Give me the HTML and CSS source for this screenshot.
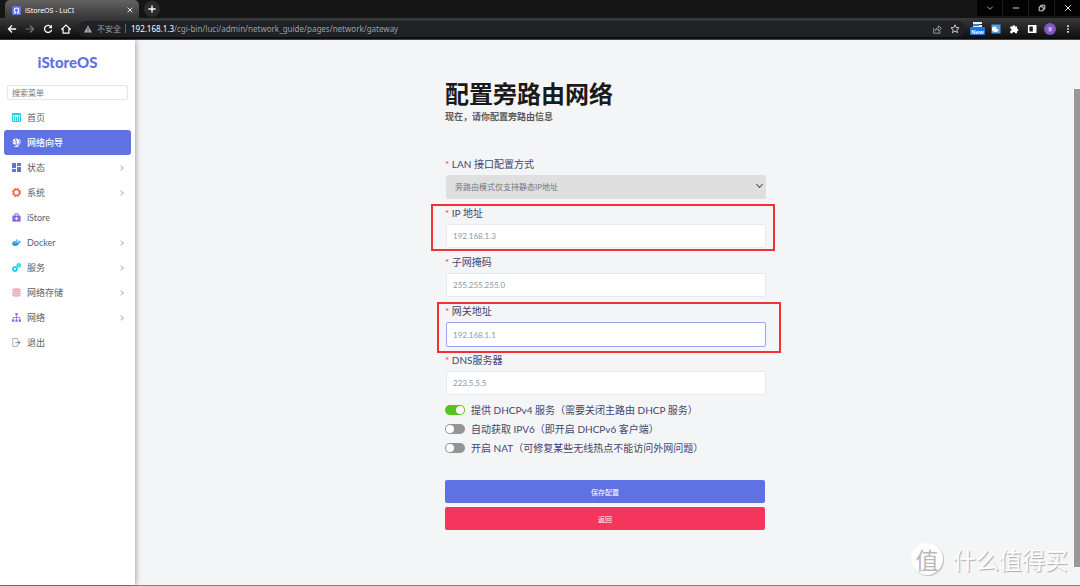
FILE: index.html
```html
<!DOCTYPE html>
<html lang="zh-CN">
<head>
<meta charset="utf-8">
<title>iStoreOS - LuCI</title>
<link rel="stylesheet" href="styles.css">
</head>
<body>
<div class="browser">
  <header class="chrome">
    <div class="tabbar">
      <div class="tab">
        <svg class="favicon" viewBox="0 0 16 16"><rect width="16" height="16" rx="2" fill="#5e72e4"/><path d="M3 12.500h3.200v-1.400a4 4 0 1 1 3.600 0v1.400H13" fill="none" stroke="#fff" stroke-width="2"/></svg>
        <span class="tab-title">iStoreOS - LuCI</span>
        <button class="icon-btn" aria-label="关闭标签页"><svg class="i6" viewBox="0 0 10 10"><path d="M1 1l8 8M9 1l-8 8" stroke="#eee" stroke-width="1.600"/></svg></button>
      </div>
      <button class="new-tab" aria-label="新标签页"><svg class="i8" viewBox="0 0 10 10"><path d="M5 .5v9M.5 5h9" stroke="#fff" stroke-width="1.700"/></svg></button>
      <div class="window-controls">
        <button aria-label="搜索标签页"><svg class="i8" viewBox="0 0 10 10"><path d="M1.500 3.200L5 6.700l3.500-3.500" fill="none" stroke="#aaa" stroke-width="1.200"/></svg></button>
        <button aria-label="最小化"><svg class="i8" viewBox="0 0 10 10"><path d="M1 5h8" stroke="#bbb" stroke-width="1.400"/></svg></button>
        <button aria-label="还原"><svg class="i8" viewBox="0 0 10 10"><path d="M1.500 3.500h5v5h-5zM3.500 3.500v-2h5v5h-2" fill="none" stroke="#ddd" stroke-width="1.200"/></svg></button>
        <button aria-label="关闭"><svg class="i8" viewBox="0 0 10 10"><path d="M1.500 1.500l7 7M8.500 1.500l-7 7" stroke="#eee" stroke-width="1.200"/></svg></button>
      </div>
    </div>
    <div class="toolbar">
      <nav class="nav-buttons" aria-label="导航">
        <button class="icon-btn" aria-label="后退"><svg class="i10" viewBox="0 0 12 12"><path d="M11 6H2M6 1.800L1.800 6 6 10.200" fill="none" stroke="#fff" stroke-width="1.600"/></svg></button>
        <button class="icon-btn" aria-label="前进"><svg class="i10" viewBox="0 0 12 12"><path d="M1 6h9M6 1.800L10.200 6 6 10.200" fill="none" stroke="#777" stroke-width="1.400"/></svg></button>
        <button class="icon-btn" aria-label="刷新"><svg class="i10" viewBox="0 0 12 12"><path d="M9.500 3.200A4.300 4.300 0 1 0 10.300 7" fill="none" stroke="#fff" stroke-width="1.600"/><path d="M10.800 1v4.200H6.600z" fill="#fff"/></svg></button>
        <button class="icon-btn" aria-label="主页"><svg class="i10" viewBox="0 0 12 12"><path d="M.8 6.200L6 1.300l5.200 4.900H9.500v4.800h-7V6.200z" fill="none" stroke="#fff" stroke-width="1.400"/></svg></button>
      </nav>
      <div class="address">
        <svg class="i8" viewBox="0 0 10 10"><path d="M5 .5l5 9H0z" fill="#aaa"/><path d="M5 3.500v3M5 7.300v1.200" stroke="#202124"/></svg>
        <span class="insecure">不安全</span>
        <span class="url"><b>192.168.1.3</b>/cgi-bin/luci/admin/network_guide/pages/network/gateway</span>
        <button class="icon-btn" aria-label="分享"><svg class="i10" viewBox="0 0 12 12"><path d="M2 4.500v6.500h7.500V8.500M4 8c.3-2.500 2-3.700 4-3.700V2.200l3.300 3.100L8 8.300V6.200C6.300 6.200 5 6.800 4 8z" fill="none" stroke="#aaa"/></svg></button>
        <button class="icon-btn" aria-label="收藏"><svg class="i10" viewBox="0 0 12 12"><path d="M6 1l1.400 3.300 3.500.3-2.700 2.300.8 3.500-3-1.900-3 1.900.8-3.500L1.100 4.600l3.500-.3z" fill="none" stroke="#ccc" stroke-width="1.200"/></svg></button>
      </div>
      <div class="extensions">
        <button class="icon-btn wide" aria-label="扩展 New"><svg class="ext-new" viewBox="0 0 15 13"><path d="M3 0h9v2H6v1h6v3H3z" fill="#e8f2fa"/><path d="M3 2h6v2H3z" fill="#2b87c8"/><rect y="5" width="15" height="8" rx="1" fill="#1a73e8"/><text x="7.500" y="11.500" text-anchor="middle" class="badge-text">New</text></svg></button>
        <button class="icon-btn" aria-label="扩展"><svg class="i10" viewBox="0 0 10 10"><rect x=".5" y=".5" width="9" height="9" fill="#4ba0e6"/><path d="M3 2.500A2.700 2.700 0 0 0 4 7.800c2 .7 3.600-.5 3.500-2.300C5.800 5.700 4.800 4.500 5.500 3z" fill="#fff"/></svg></button>
        <button class="icon-btn" aria-label="扩展程序"><svg class="i10" viewBox="0 0 12 12"><path d="M1.500 3h2.700a1.500 1.500 0 1 1 3 0h2.500v2.700a1.500 1.500 0 1 1 0 3V11H7.200a1.500 1.500 0 0 0-3 0H1.500V8.500a1.500 1.500 0 0 0 0-3z" fill="#fff"/></svg></button>
        <button class="icon-btn" aria-label="侧边栏"><svg class="i10" viewBox="0 0 12 12"><path d="M2 2h8.500v8H2z" fill="none" stroke="#fff" stroke-width="1.800"/><path d="M7 2h3.500v8H7z" fill="#fff"/></svg></button>
        <button class="avatar" aria-label="用户">李</button>
        <button class="icon-btn" aria-label="菜单"><svg class="i10" viewBox="0 0 12 12"><path d="M5 1.500h2v2H5zM5 5h2v2H5zM5 8.500h2v2H5z" fill="#eee"/></svg></button>
      </div>
    </div>
  </header>

  <div class="page">
    <aside class="sidebar">
      <a class="brand" href="#">iStoreOS</a>
      <input class="search" type="text" placeholder="搜索菜单" aria-label="搜索菜单">
      <nav class="menu" aria-label="主菜单">
        <a class="item" href="#"><svg class="i9" viewBox="0 0 9 9"><path d="M.5 .5h8v8h-8z" fill="#d5f7fc" stroke="#25cfe8"/><path d="M1 1.500h7M2.500 3v5M4.500 4v4M6.500 3v5" stroke="#25cfe8"/></svg>首页</a>
        <a class="item active" href="#" aria-current="page"><svg class="i9" viewBox="0 0 12 12"><circle cx="5.200" cy="4.800" r="4.300" fill="#fff"/><path d="M5 1.200L4.500 3l1.800 1L5 5.500l1.200 1.700L5.500 9M1.500 4.500l1.700 1.300" fill="none" stroke="#5e72e4" stroke-width="1.300"/><path d="M10 1.500A5.600 5.600 0 0 1 5.500 10.300M3 11.300h5.500" fill="none" stroke="#fff" stroke-width="1.200"/></svg>网络向导</a>
        <a class="item" href="#"><svg class="i9" viewBox="0 0 9 9"><path d="M0 0h4v5H0zM5 0h4v3H5zM0 6h4v3H0zM5 4h4v5H5z" fill="#5e72e4"/></svg>状态<span class="chevron"></span></a>
        <a class="item" href="#"><svg class="i9" viewBox="0 0 12 12"><circle cx="6" cy="6" r="3.900" fill="none" stroke="#fb6340" stroke-width="2"/><circle cx="6" cy="6" r="5.200" fill="none" stroke="#fb6340" stroke-width="1.600" stroke-dasharray="2.400 1.684"/></svg>系统<span class="chevron"></span></a>
        <a class="item" href="#"><svg class="i9" viewBox="0 0 12 12"><path d="M.5 3.500h11v8H.5z" fill="#8965e0"/><path d="M3.800 4V1.200h4.400V4" fill="none" stroke="#8965e0" stroke-width="1.300"/><path d="M6 5.200v4.400M3.800 7.400h4.400" stroke="#fff" stroke-width="1.500"/></svg>iStore</a>
        <a class="item" href="#"><svg class="i9" viewBox="0 0 12 12"><path d="M0 6h8.500c.5-.8.300-1.800-.1-2.500l.6-.6c.8.500 1.200 1 1.300 1.900.7-.1 1.300 0 1.700.3-.4 1-1.200 1.300-2.200 1.300C8.900 9.200 7 10.700 4 10.700 1.200 10.700 0 9 0 6zM1.500 4h1.600v1.600H1.500zM3.500 4h1.600v1.600H3.500zM5.500 4h1.600v1.600H5.500zM5.500 2h1.600v1.600H5.500z" fill="#2196f3"/></svg>Docker<span class="chevron"></span></a>
        <a class="item" href="#"><svg class="i9" viewBox="0 0 12 12"><g fill="none" stroke="#11cdef"><circle cx="3.900" cy="8" r="2.500" stroke-width="2"/><circle cx="3.900" cy="8" r="3.600" stroke-dasharray="1.800 1.027"/><circle cx="9" cy="3" r="1.800" stroke-width="1.700"/><circle cx="9" cy="3" r="2.700" stroke-dasharray="1.800 1.027"/></g></svg>服务<span class="chevron"></span></a>
        <a class="item" href="#"><svg class="i9" viewBox="0 0 12 12"><path d="M.5 1.300Q6-.7 11.500 1.300v9.400Q6 12.700 .5 10.700z" fill="#f3a4b5"/><path d="M.5 3.300q5.500 1 11 0M.5 6q5.500 1 11 0M.5 8.700q5.500 1 11 0" fill="none" stroke="#fff" stroke-width=".6"/></svg>网络存储<span class="chevron"></span></a>
        <a class="item" href="#"><svg class="i9" viewBox="0 0 12 12"><path d="M4.500 0h3v3h-3zM0 8.500h3v3H0zM4.500 8.500h3v3h-3zM9 8.500h3v3H9z" fill="#8965e0"/><path d="M6 3v6M1.500 9V6h9v3" fill="none" stroke="#8965e0"/></svg>网络<span class="chevron"></span></a>
        <a class="item" href="#"><svg class="i9" viewBox="0 0 12 12"><path d="M7.500 3.500V.7H1v10.600h6.500V8.500" fill="none" stroke="#adb5bd" stroke-width="1.300"/><path d="M4.500 5.200H8V3l3.800 3L8 9V6.800H4.500z" fill="#8898aa"/></svg>退出</a>
      </nav>
    </aside>

    <main class="content">
      <form class="wizard">
        <h1>配置旁路由网络</h1>
        <p class="lead">现在，请你配置旁路由信息</p>
        <div class="field select-field">
          <label for="mode">LAN 接口配置方式</label>
          <select id="mode" disabled><option>旁路由模式仅支持静态IP地址</option></select>
        </div>
        <div class="field">
          <label for="ip">IP 地址</label>
          <input id="ip" type="text" value="192.168.1.3">
          <span class="mark mark-ip"></span>
        </div>
        <div class="field">
          <label for="mask">子网掩码</label>
          <input id="mask" type="text" value="255.255.255.0">
        </div>
        <div class="field">
          <label for="gateway">网关地址</label>
          <input id="gateway" class="focused" type="text" value="192.168.1.1">
          <span class="mark mark-gateway"></span>
        </div>
        <div class="field">
          <label for="dns">DNS服务器</label>
          <input id="dns" type="text" value="223.5.5.5">
        </div>
        <label class="switch"><input type="checkbox" checked>提供 DHCPv4 服务（需要关闭主路由 DHCP 服务）</label>
        <label class="switch"><input type="checkbox">自动获取 IPV6（即开启 DHCPv6 客户端）</label>
        <label class="switch"><input type="checkbox">开启 NAT（可修复某些无线热点不能访问外网问题）</label>
        <div class="actions">
          <button class="save" type="button">保存配置</button>
          <button class="back" type="button">返回</button>
        </div>
      </form>
    </main>
    <div class="scroll-thumb"></div>
    <div class="watermark"><span class="seal">值</span>什么值得买</div>
  </div>
  <div class="taskbar-edge"></div>
</div>
</body>
</html>
```
FILE: styles.css
```css
* { box-sizing: border-box; }
body {
  margin: 0;
  font-family: Lato, "Noto Sans CJK SC", sans-serif;
  color: #45456c;
  background: #f4f5f7;
}
button, input, select { font-family: inherit; margin: 0; }
button { padding: 0; border: 0; background: none; color: inherit; }
svg { display: block; flex: none; }
.i6 { width: 6px; height: 6px; }
.i8 { width: 8px; height: 8px; }
.i9 { width: 9px; height: 9px; }
.i10 { width: 10px; height: 10px; }

.browser { display: flex; flex-direction: column; min-height: 100vh; }

/* Browser chrome */
.chrome { font-family: "Noto Sans", "Noto Sans CJK SC", sans-serif; background: #141414; }
.tabbar { display: flex; height: 18px; padding-left: 5px; background: #151515; }
.tab {
  display: flex;
  align-items: center;
  gap: 4px;
  width: 134px;
  padding: 2px 6px 0 7px;
  border-radius: 5px 5px 0 0;
  background: linear-gradient(#626262, #383838);
}
.favicon { width: 9px; height: 9px; }
.tab-title { flex: 1; font-size: 7px; color: #fff; }
.new-tab {
  display: grid;
  place-items: center;
  width: 16px;
  height: 16px;
  margin: 1px 0 0 5px;
  border-radius: 50%;
  background: #2b2b2b;
}
.window-controls { display: flex; gap: 1px; height: 16px; margin-left: auto; background: #1c1c1c; }
.window-controls button { display: grid; place-items: center; width: 25px; background: #030303; }
.toolbar {
  display: flex;
  align-items: center;
  height: 22px;
  border-bottom: 1px solid #444;
  background: linear-gradient(#393939, #0c0c0c);
}
.nav-buttons { display: flex; gap: 8px; padding: 0 7px; }
.address {
  display: flex;
  align-items: center;
  flex: 1;
  gap: 8px;
  height: 16px;
  padding: 0 5px 0 6px;
  border-radius: 8px;
  background: #202124;
  font-size: 8px;
  color: #9aa0a6;
}
.insecure { padding-right: 4px; margin-left: -3px; border-right: 1px solid #666; line-height: 9px; }
.url { flex: 1; margin-left: -3px; white-space: nowrap; }
.url b { font-weight: 400; color: #fff; }
.extensions { display: flex; align-items: center; gap: 8px; padding: 0 7px; }
.wide { margin: 0 -2px; }
.ext-new { width: 15px; height: 13px; }
.badge-text { font: bold 6px "Liberation Sans", sans-serif; fill: #fff; }
.avatar {
  width: 12px;
  height: 12px;
  margin: 0 -1px;
  border-radius: 50%;
  background: #7e57c2;
  font-size: 5px;
  line-height: 12px;
  color: #fff;
}

/* Sidebar */
.page { position: relative; display: flex; flex: 1; }
.sidebar { width: 135px; background: #fff; box-shadow: 0 0 6px rgba(0, 0, 0, .45); }
.brand {
  display: block;
  padding: 12px 0 12px;
  font-size: 15px;
  font-weight: 900;
  line-height: 20px;
  text-align: center;
  text-decoration: none;
  color: #5e72e4;
}
.search {
  display: block;
  width: calc(100% - 14px);
  height: 15px;
  margin: 1px 7px 5px;
  padding: 0 4px;
  border: 1px solid #e3e5e8;
  border-radius: 2px;
  font-size: 8px;
  color: #555;
}
.search::placeholder { color: #777; }
.menu { display: flex; flex-direction: column; padding: 0 4px; }
.item {
  display: flex;
  align-items: center;
  gap: 6px;
  height: 25px;
  padding: 0 8px;
  border-radius: 3px;
  font-size: 9px;
  text-decoration: none;
  color: #5c6066;
}
.item.active { background: #5e72e4; color: #fff; font-weight: 500; }
.chevron {
  width: 4px;
  height: 4px;
  margin-left: auto;
  border: solid #b4bcc5;
  border-width: 1px 1px 0 0;
  transform: rotate(45deg);
}

/* Gateway form */
.content { flex: 1; padding: 39px 5px 0 0; }
.wizard { width: 320px; max-width: 100%; margin: 0 auto; }
h1 { margin: 0; font-size: 24px; line-height: 30px; color: #1a1a1a; white-space: nowrap; }
.lead { margin: 0 0 31px; font-size: 9px; font-weight: 700; line-height: 15px; color: #5a5a5a; }
.field { position: relative; height: 49px; padding-left: 1px; margin-right: -1px; }
.field label { display: block; margin: 0 0 2px -1px; font-size: 10px; line-height: 18px; }
.field label::before { content: "* "; color: #f5365c; }
.field input, .field select {
  display: block;
  width: 100%;
  height: 24px;
  padding: 0 6px;
  border: 1px solid #e6e9ee;
  border-radius: 2px;
  background: #fff;
  font-size: 8px;
  color: #8898aa;
}
.field select {
  appearance: none;
  padding: 0 8px;
  border-color: #dfdfdf;
  background: #dfdfdf;
  color: #777;
  opacity: 1;
}
.select-field::after {
  content: "";
  position: absolute;
  right: 4px;
  bottom: 17px;
  width: 4px;
  height: 4px;
  border: solid #555;
  border-width: 0 1px 1px 0;
  transform: rotate(45deg);
}
.field .focused { height: 25px; border-color: #98a5ee; }
.mark { position: absolute; border: 2px solid #f03232; pointer-events: none; }
.mark-ip { inset: 0 -9px 2px -14px; }
.mark-gateway { inset: 0 -15px -2px -8px; }
.switch { display: flex; align-items: center; gap: 6px; height: 19px; font-size: 10px; white-space: nowrap; }
.switch input {
  display: flex;
  align-items: center;
  appearance: none;
  width: 20px;
  height: 10px;
  border-radius: 5px;
  background: #949494;
}
.switch input::before { content: ""; width: 8px; height: 8px; margin: 0 1px; border-radius: 50%; background: #fff; }
.switch input:checked { justify-content: flex-end; background: #52c41a; }
.actions { display: grid; gap: 4px; padding: 23px 0 40px; }
.actions button { height: 23px; border-radius: 2px; font-size: 7px; color: #fff; }
.save { background: #5e72e4; }
.back { background: #f5365c; }

.scroll-thumb { position: absolute; top: 49px; right: 0; bottom: 18px; width: 6px; background: #989898; }
.watermark {
  position: absolute;
  right: 12px;
  bottom: 10px;
  display: flex;
  align-items: center;
  gap: 10px;
  font-family: "Noto Sans CJK SC", sans-serif;
  font-size: 23px;
  line-height: 32px;
  color: #fff;
  text-shadow: 1px 1px 1px #aaa;
}
.seal { width: 32px; border-radius: 50%; background: #fff; box-shadow: 1px 1px 1px #bbb; text-align: center; color: #b9b9b9; text-shadow: none; }
.taskbar-edge { height: 1px; background: #858585; }
```
